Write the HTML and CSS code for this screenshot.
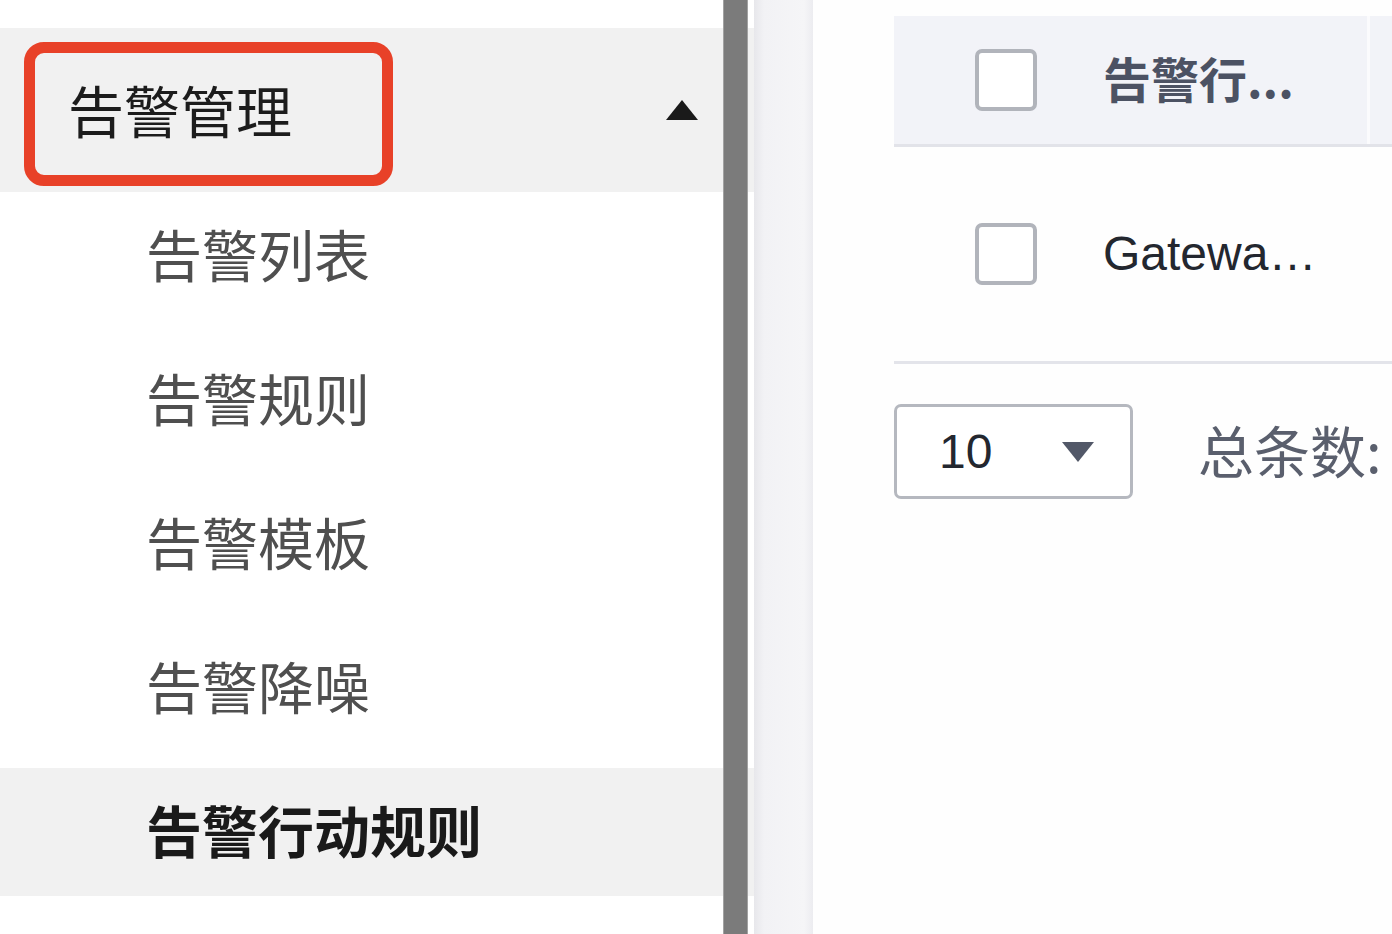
FILE: index.html
```html
<!DOCTYPE html>
<html lang="zh-CN">
<head>
<meta charset="utf-8">
<title>告警行动规则</title>
<link rel="stylesheet" href="styles.css">
</head>
<body>
<div class="page">
  <aside class="sidebar">
    <div class="menu-group">
      <div class="menu-head">
        <span class="mark">告警管理</span>
        <span class="caret-up"></span>
      </div>
      <ul class="menu-list">
        <li class="menu-item">告警列表</li>
        <li class="menu-item">告警规则</li>
        <li class="menu-item">告警模板</li>
        <li class="menu-item">告警降噪</li>
        <li class="menu-item active">告警行动规则</li>
      </ul>
    </div>
    <div class="scrollbar"></div>
  </aside>
  <div class="gutter"></div>
  <main class="main">
    <div class="table">
      <div class="thead">
        <div class="cell check-cell"><span class="checkbox"></span></div>
        <div class="cell name-cell th-text">告警行...</div>
        <div class="col-divider"></div>
        <div class="cell rest-cell"></div>
      </div>
      <div class="trow">
        <div class="cell check-cell"><span class="checkbox"></span></div>
        <div class="cell name-cell td-text">Gatewa…</div>
      </div>
    </div>
    <div class="pager">
      <div class="select">
        <span class="select-value">10</span>
        <span class="caret-down"></span>
      </div>
      <span class="total">总条数:</span>
    </div>
  </main>
</div>
</body>
</html>
```

FILE: styles.css
```css
* { box-sizing: border-box; }
html, body {
  margin: 0;
  padding: 0;
  background: #ffffff;
  font-family: "Noto Sans CJK SC", "Liberation Sans", sans-serif;
}
.page {
  display: flex;
  width: 1392px;
  height: 934px;
  overflow: hidden;
}
.sidebar {
  position: relative;
  width: 754px;
  flex: 0 0 754px;
  background: #ffffff;
  padding-top: 28px;
}
.menu-group { display: flex; flex-direction: column; }
.menu-head {
  height: 164px;
  background: #f1f1f1;
  display: flex;
  align-items: center;
  justify-content: space-between;
  padding-left: 24px;
  padding-right: 56px;
}
.mark {
  display: flex;
  align-items: center;
  width: 369px;
  height: 144px;
  border: 11px solid #e84128;
  border-radius: 20px;
  padding-left: 33px;
  padding-bottom: 10px;
  font-size: 56px;
  line-height: 1;
  color: #1c1c1c;
  margin-top: 8px;
}
.caret-up {
  width: 0;
  height: 0;
  border-left: 16px solid transparent;
  border-right: 16px solid transparent;
  border-bottom: 20px solid #1a1a1a;
}
.menu-list {
  list-style: none;
  margin: 0;
  padding: 0;
  display: flex;
  flex-direction: column;
  gap: 16px;
}
.menu-item {
  height: 128px;
  display: flex;
  align-items: center;
  padding-left: 146px;
  padding-bottom: 6px;
  font-size: 56px;
  line-height: 1;
  color: #4f4f4f;
}
.menu-item.active {
  background: #f1f1f1;
  color: #1a1a1a;
  font-weight: 700;
}
.scrollbar {
  position: absolute;
  top: 0;
  bottom: 0;
  left: 723px;
  width: 25px;
  background: #7b7b7b;
  border-left: 1px solid #a2a2a2;
  border-right: 1px solid #a2a2a2;
}
.gutter {
  flex: 0 0 59px;
  background: linear-gradient(to right, #e7e7eb 0, #f2f2f5 10px, #f5f5f7 50px, #ececf0 59px);
}
.main {
  flex: 1;
  padding-left: 81px;
  padding-top: 16px;
  background: #fefefe;
  overflow: hidden;
}
.table { display: flex; flex-direction: column; width: 600px; }
.thead {
  display: flex;
  height: 131px;
  background: #f2f3f8;
  border-bottom: 3px solid #e2e3e9;
}
.trow {
  display: flex;
  height: 217px;
  border-bottom: 3px solid #e3e4ea;
  background: #fefefe;
}
.cell { display: flex; align-items: center; }
.check-cell { width: 209px; padding-left: 81px; }
.checkbox {
  width: 62px;
  height: 62px;
  border: 4px solid #b1b4bb;
  border-radius: 7px;
  background: #ffffff;
}
.name-cell { width: 264px; white-space: nowrap; }
.th-text {
  font-size: 48px;
  font-weight: 700;
  color: #4c5263;
  line-height: 1;
  padding-bottom: 6px;
}
.td-text {
  font-family: "Liberation Sans", "Noto Sans CJK SC", sans-serif;
  font-size: 48px;
  color: #23272f;
  line-height: 1;
}
.col-divider {
  width: 3px;
  background: #fbfbfd;
}
.rest-cell { flex: 1; }
.pager {
  display: flex;
  align-items: center;
  margin-top: 40px;
  gap: 65px;
}
.select {
  width: 239px;
  height: 95px;
  border: 3px solid #b5b8bf;
  border-radius: 7px;
  display: flex;
  align-items: center;
  justify-content: space-between;
  padding-left: 42px;
  padding-right: 36px;
  background: #ffffff;
}
.select-value {
  font-family: "Liberation Sans", sans-serif;
  font-size: 48px;
  color: #23272f;
  line-height: 1;
}
.caret-down {
  width: 0;
  height: 0;
  border-left: 16px solid transparent;
  border-right: 16px solid transparent;
  border-top: 20px solid #525868;
}
.total {
  font-size: 56px;
  color: #5a5f6d;
  line-height: 1;
  white-space: nowrap;
  padding-bottom: 6px;
}
```
